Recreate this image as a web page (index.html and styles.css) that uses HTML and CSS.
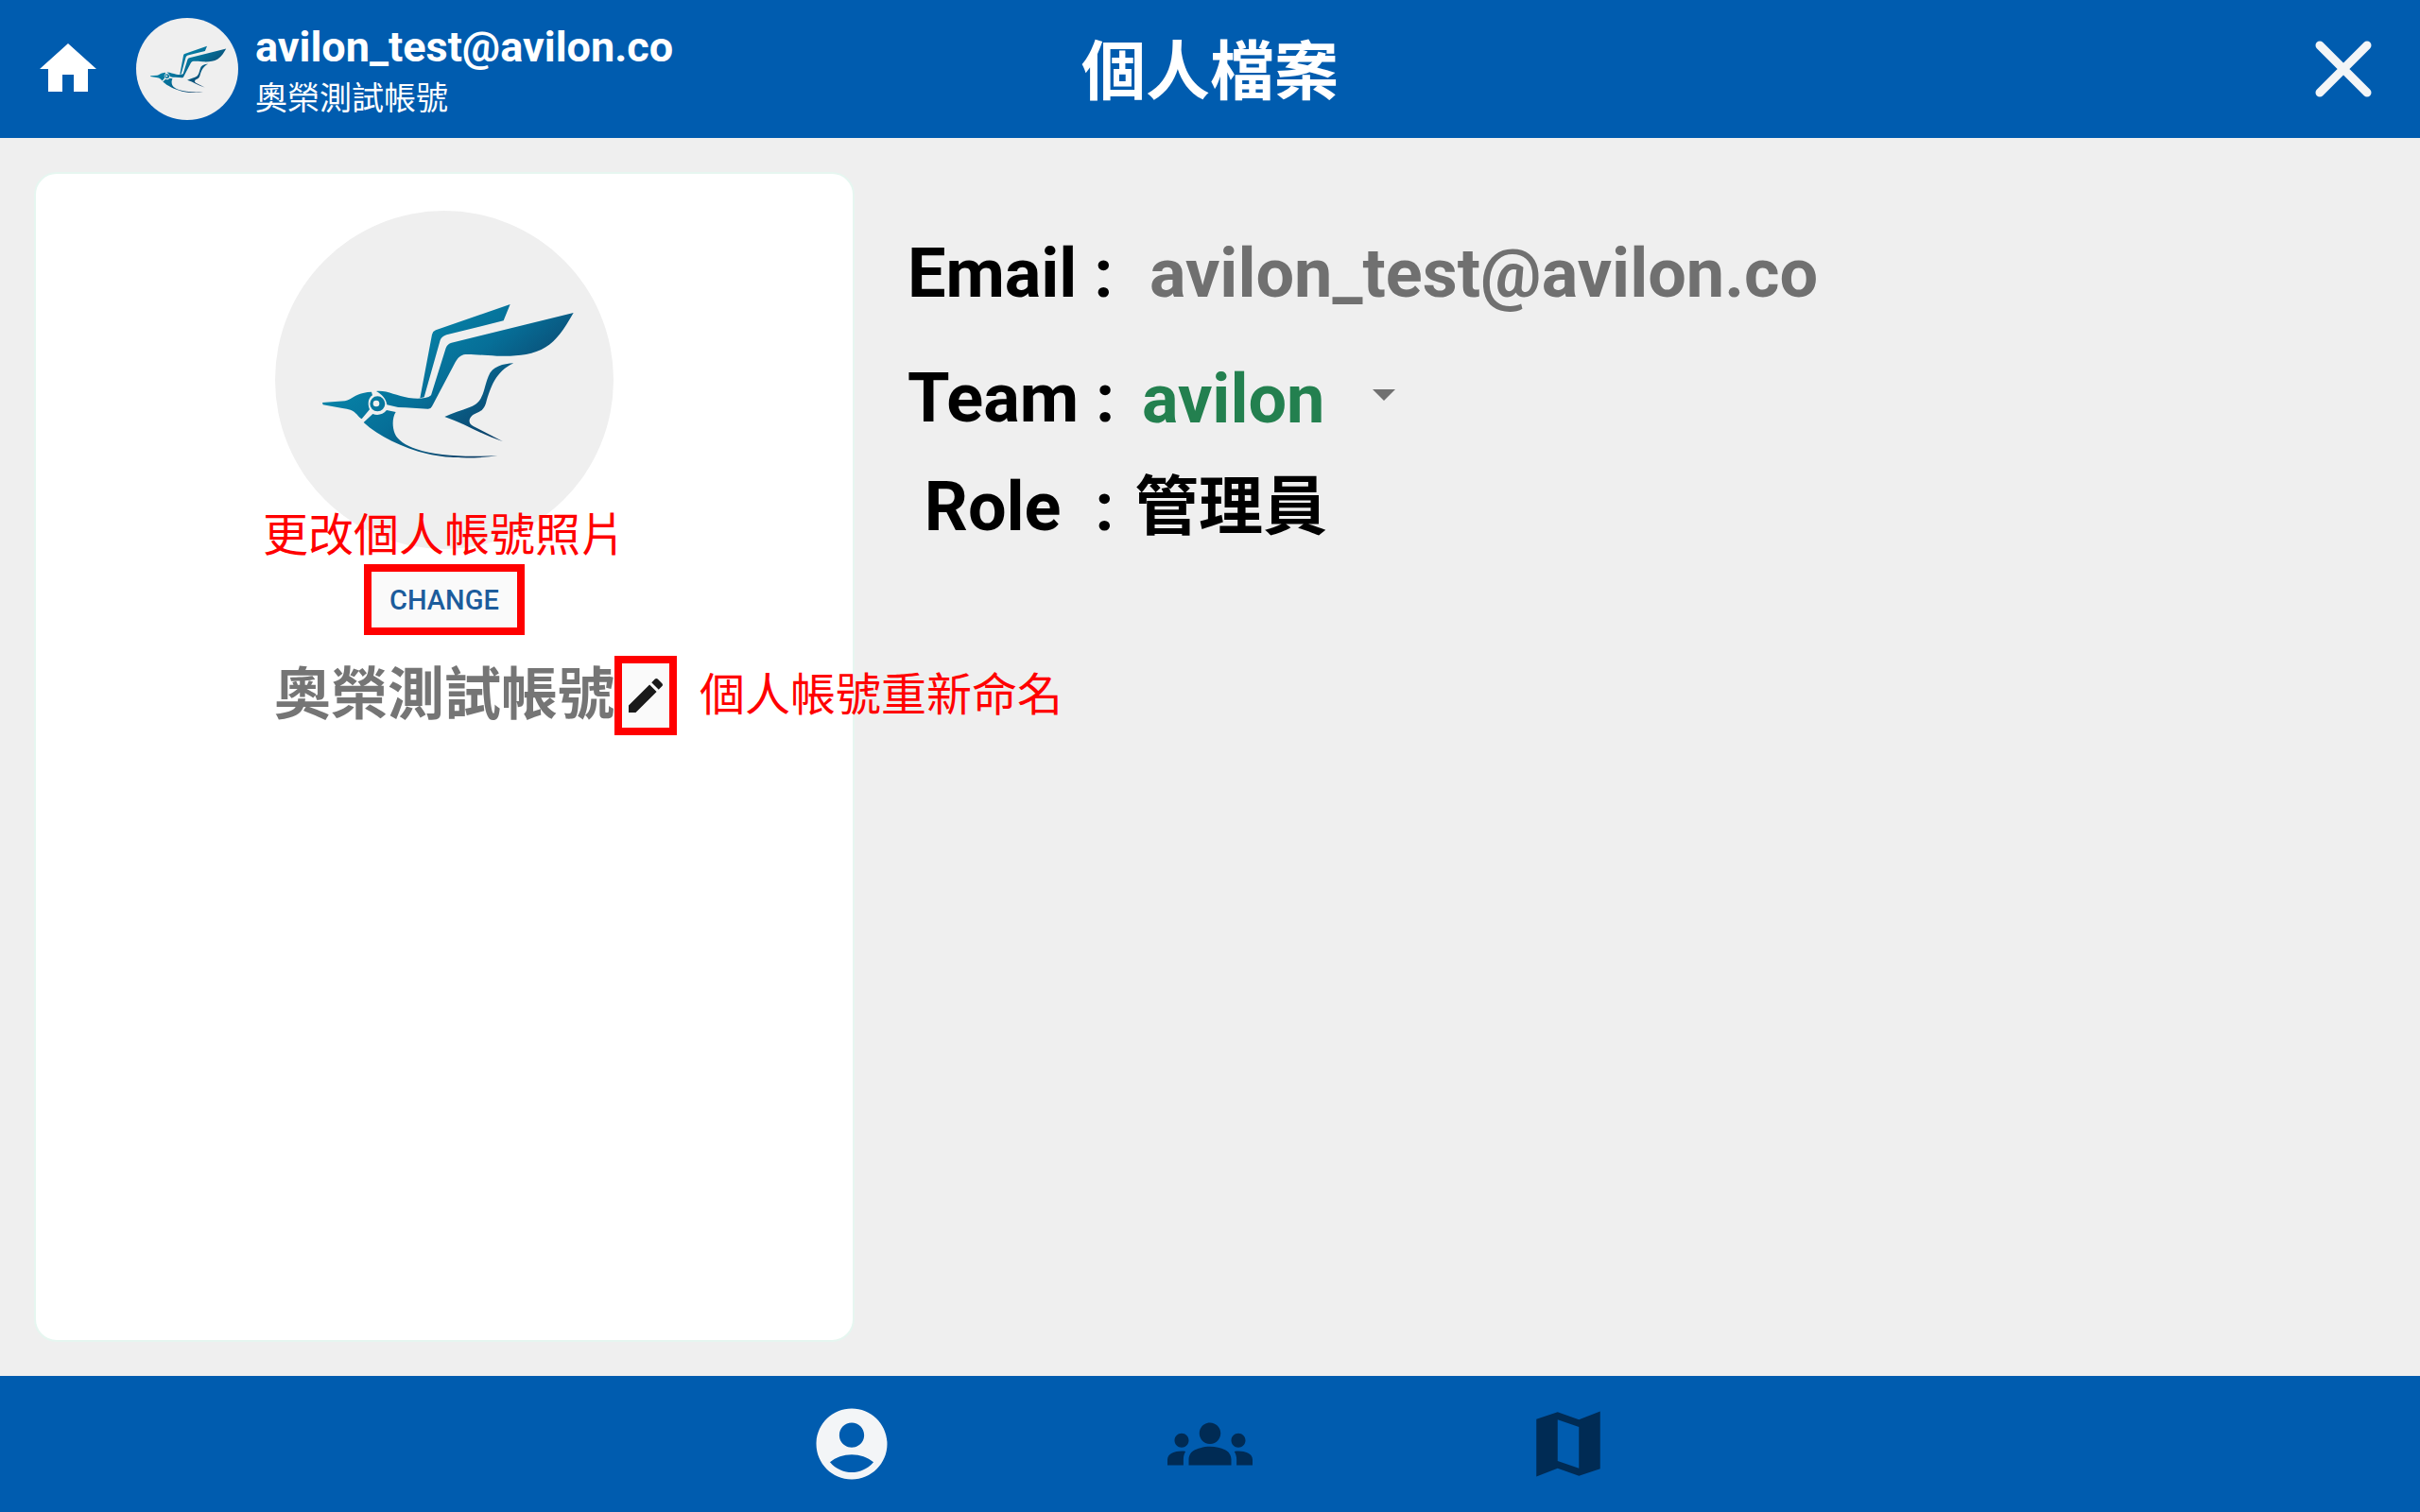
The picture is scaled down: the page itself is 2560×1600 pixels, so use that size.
FILE: index.html
```html
<!DOCTYPE html>
<html lang="zh-Hant">

<head>
    <meta charset="UTF-8">
    <meta name="viewport" content="width=device-width, initial-scale=1.0">
    <title>個人檔案</title>
    <link rel="stylesheet" href="styles.css">
</head>

<body>
    <!-- shared bird logo -->
    <svg class="defs" aria-hidden="true">
        <defs>
            <linearGradient id="birdColor" gradientUnits="userSpaceOnUse" x1="250" y1="100" x2="560" y2="480">
                <stop offset="0" stop-color="#0788ab" />
                <stop offset="0.5" stop-color="#066f98" />
                <stop offset="1" stop-color="#0d4068" />
            </linearGradient>
            <symbol id="bird" viewBox="0 0 1074 1074">
                <g transform="translate(114 261)" fill="url(#birdColor)">
                    <path d="M632 36L611 88L430 133Q415 138 410 150L359 331L346 334L384 132Q386 122 396 118Z" />
                    <path d="M833 63C800 120 780 150 745 172C700 200 640 202 590 200C540 197 510 194 490 195C474 197 466 206 458 220L384 360Q380 369 370 368L300 364Q270 364 241 355C238 335 225 322 207 312C240 308 270 327 310 333Q340 338 362 333Q375 332 381 325L428 175Q433 161 446 158Z" />
                    <path d="M36 348L108 343C130 338 140 322 165 318Q180 314 192 314L195 325C183 332 178 350 186 370L161 400C150 395 145 378 125 371Q115 368 100 366L38 355Z" />
                    <path d="M167 411L196 384C212 390 228 386 240 372L269 378C258 395 257 425 266 446C275 468 300 483 335 496C400 518 480 521 592 517C520 527 430 526 370 511C290 492 215 455 167 411Z" />
                    <path d="M643 223C610 225 575 232 563 265C545 310 550 345 505 362C475 374 450 380 424 393C490 415 540 450 608 471L515 423C500 415 500 403 508 393C520 378 545 383 555 350C570 300 585 250 643 223Z" />
                    <path fill-rule="evenodd" d="M211 328a24 24 0 1 0 0 48a24 24 0 1 0 0-48zM207 341a10 10 0 1 1 0 20a10 10 0 1 1 0-20z" />
                </g>
            </symbol>
        </defs>
    </svg>

    <header class="topbar">
        <div class="account">
            <button class="icon-btn" aria-label="首頁">
                <svg class="home-icon" viewBox="0 0 24 24">
                    <path d="M10 20v-6h4v6h5v-8h3L12 3 2 12h3v8z" />
                </svg>
            </button>
            <div class="avatar avatar-small"><svg viewBox="0 0 1074 1074"><use href="#bird" /></svg></div>
            <div class="account-text">
                <div class="account-email">avilon_test@avilon.co</div>
                <div class="account-name">奧榮測試帳號</div>
            </div>
        </div>
        <h1>個人檔案</h1>
        <button class="icon-btn close-btn" aria-label="關閉">
            <svg class="close-icon" viewBox="0 0 60 60">
                <path d="M5 5L55 55M55 5L5 55" />
            </svg>
        </button>
    </header>

    <main>
        <section class="card">
            <div class="avatar avatar-large"><svg viewBox="0 0 1074 1074"><use href="#bird" /></svg></div>
            <div class="change">
                <span class="note note-top">更改個人帳號照片</span>
                <button class="change-btn">CHANGE</button>
            </div>
            <div class="name-row">
                <h2>奧榮測試帳號</h2>
                <div class="edit">
                    <button class="edit-btn" aria-label="重新命名">
                        <svg viewBox="0 0 24 24">
                            <path d="M3 17.25V21h3.75L17.81 9.94l-3.75-3.75L3 17.25zM20.71 7.04c.39-.39.39-1.02 0-1.41l-2.34-2.34c-.39-.39-1.02-.39-1.41 0l-1.83 1.83 3.75 3.75 1.83-1.83z" />
                        </svg>
                    </button>
                    <span class="note note-side">個人帳號重新命名</span>
                </div>
            </div>
        </section>

        <section class="info">
            <div class="row row-email">
                <span class="label">Email :</span>
                <span class="value">avilon_test@avilon.co</span>
            </div>
            <div class="row row-team">
                <label class="label" for="team">Team :</label>
                <div class="team">
                    <select id="team">
                        <option>avilon</option>
                    </select>
                    <svg class="arrow" viewBox="0 0 24 12">
                        <path d="M0 0h24L12 12z" />
                    </svg>
                </div>
            </div>
            <div class="row row-role">
                <span class="label"> Role  :</span>
                <span class="value">管理員</span>
            </div>
        </section>
    </main>

    <nav class="tabs">
        <button class="tab active" aria-label="個人">
            <svg viewBox="0 0 24 24">
                <path d="M12 2C6.48 2 2 6.48 2 12s4.48 10 10 10 10-4.48 10-10S17.52 2 12 2zm0 4c1.93 0 3.5 1.57 3.5 3.5S13.93 13 12 13s-3.5-1.57-3.5-3.5S10.07 6 12 6zm0 14c-2.03 0-4.43-.82-6.14-2.88C7.55 15.8 9.68 15 12 15s4.45.8 6.14 2.12C16.43 19.18 14.03 20 12 20z" />
            </svg>
        </button>
        <button class="tab" aria-label="團隊">
            <svg viewBox="0 0 24 24">
                <path d="M12 12.75c1.63 0 3.07.39 4.24.9 1.08.48 1.76 1.56 1.76 2.73V18H6v-1.61c0-1.18.68-2.26 1.76-2.73 1.17-.52 2.61-.91 4.24-.91zM4 13c1.1 0 2-.9 2-2s-.9-2-2-2-2 .9-2 2 .9 2 2 2zm1.13 1.1c-.37-.06-.74-.1-1.13-.1-.99 0-1.93.21-2.78.58C.48 14.9 0 15.62 0 16.43V18h4.5v-1.61c0-.83.23-1.61.63-2.29zM20 13c1.1 0 2-.9 2-2s-.9-2-2-2-2 .9-2 2 .9 2 2 2zm4 3.43c0-.81-.48-1.53-1.22-1.85-.85-.37-1.79-.58-2.78-.58-.39 0-.76.04-1.13.1.4.68.63 1.46.63 2.29V18H24v-1.57zM12 6c1.66 0 3 1.34 3 3s-1.34 3-3 3-3-1.34-3-3 1.34-3 3-3z" />
            </svg>
        </button>
        <button class="tab" aria-label="地圖">
            <svg viewBox="0 0 24 24">
                <path d="M15 5.1L9 3 3 5.02v16.2l6-2.33 6 2.1 6-2.02V2.77L15 5.1zm0 13.79l-6-2.11V5.11l6 2.11v11.67z" />
            </svg>
        </button>
    </nav>
</body>

</html>
```
FILE: styles.css
```css
* {
    padding: 0;
    margin: 0;
    box-sizing: border-box;
    font-family: Roboto, "Noto Sans CJK TC", sans-serif;
}

body {
    display: flex;
    flex-direction: column;
    min-height: 100vh;
    background: #efefef;
}

button {
    background: none;
    border: none;
    cursor: pointer;
}

svg {
    display: block;
}

.defs {
    position: absolute;
    width: 0;
    height: 0;
}

/* top bar */
.topbar {
    display: grid;
    grid-template-columns: 1fr auto 1fr;
    align-items: center;
    height: 146px;
    padding: 0 36px;
    background: #005caf;
    color: #fff;
}

.account {
    display: flex;
    align-items: center;
}

.home-icon {
    width: 72px;
    height: 72px;
    fill: #fff;
}

.avatar {
    flex: none;
    border-radius: 50%;
    background: #efefef;
}

.avatar-small {
    width: 108px;
    height: 108px;
    margin: 0 18px 0 36px;
}

.avatar-large {
    width: 358px;
    height: 358px;
}

.account-text {
    padding-top: 10px;
}

.account-email {
    font-size: 45px;
    font-weight: 700;
    line-height: 52px;
}

.account-name {
    font-size: 34px;
    line-height: 56px;
}

h1 {
    padding-top: 8px;
    font-size: 68px;
    font-weight: 700;
    line-height: 100px;
}

.close-btn {
    justify-self: end;
    padding: 0 15px;
}

.close-icon {
    width: 60px;
    height: 60px;
    fill: none;
    stroke: #f3f5f7;
    stroke-width: 9;
    stroke-linecap: round;
}

/* content */
main {
    flex: 1;
    display: grid;
    grid-template-columns: 15fr 28fr;
    padding: 36px;
}

.card {
    display: flex;
    flex-direction: column;
    align-items: center;
    padding-top: 39px;
    background: #fff;
    border: 2px solid #e6f6f0;
    border-radius: 24px;
}

.change {
    position: relative;
    margin: 16px 0 22px;
}

.change-btn {
    display: block;
    width: 170px;
    height: 75px;
    background: #fafafa;
    border: 8px solid #f00;
    color: #1c5c9c;
    font-size: 29px;
    font-weight: 500;
}

.note {
    position: absolute;
    color: #f00;
    font-size: 48px;
    line-height: 60px;
    white-space: nowrap;
}

.note-top {
    bottom: 100%;
    left: 50%;
    transform: translateX(-50%);
}

.name-row {
    display: grid;
    grid-template-columns: 1fr auto 1fr;
    align-items: center;
    width: 100%;
}

.name-row h2 {
    grid-column: 2;
    color: #757575;
    font-size: 60px;
    font-weight: 700;
    line-height: 84px;
}

.edit {
    position: relative;
    width: 66px;
}

.edit-btn {
    display: flex;
    align-items: center;
    justify-content: center;
    width: 66px;
    height: 84px;
    background: #fafafa;
    border: 8px solid #f00;
}

.edit-btn svg {
    flex: none;
    width: 48px;
    height: 48px;
    fill: #1a1a1a;
}

.note-side {
    top: 12px;
    left: 100%;
    padding-left: 24px;
}

.info {
    padding: 66px 0 0 56px;
    font-size: 72px;
    font-weight: 700;
    line-height: 84px;
}

.row {
    display: flex;
    height: 84px;
}

.label {
    width: 224px;
    white-space: pre;
}

.row-email {
    margin-bottom: 48px;
}

.row-email .value {
    padding-left: 32px;
    color: #707070;
}

.row-team {
    margin-bottom: 31px;
}

.team {
    position: relative;
    padding-left: 24px;
}

.team select {
    appearance: none;
    width: 288px;
    height: 84px;
    background: none;
    border: none;
    color: #23804f;
    font-size: 72px;
    font-weight: 700;
}

.arrow {
    position: absolute;
    top: 32px;
    right: 20px;
    width: 24px;
    height: 12px;
    fill: #707070;
    pointer-events: none;
}

.row-role .value {
    padding-left: 16px;
    font-size: 68px;
}

/* bottom tabs */
.tabs {
    display: flex;
    justify-content: center;
    height: 144px;
    background: #005caf;
}

.tab {
    display: flex;
    align-items: center;
    justify-content: center;
    width: 379px;
}

.tab svg {
    width: 90px;
    height: 90px;
    fill: #002b54;
}

.tab.active svg {
    fill: #f3f5f7;
}
```
